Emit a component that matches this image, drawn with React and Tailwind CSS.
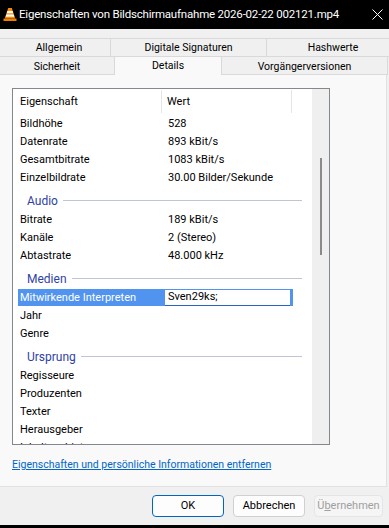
import React from "react";

const font = "font-['Roboto','Noto_Sans',sans-serif]";

const items = [
  { k: "Bildhöhe", v: "528" },
  { k: "Datenrate", v: "893 kBit/s" },
  { k: "Gesamtbitrate", v: "1083 kBit/s" },
  { k: "Einzelbildrate", v: "30.00 Bilder/Sekunde" },
  { group: "Audio" },
  { k: "Bitrate", v: "189 kBit/s" },
  { k: "Kanäle", v: "2 (Stereo)" },
  { k: "Abtastrate", v: "48.000 kHz" },
  { group: "Medien" },
  { k: "Mitwirkende Interpreten", v: "Sven29ks;", selected: true },
  { k: "Jahr", v: "" },
  { k: "Genre", v: "" },
  { group: "Ursprung" },
  { k: "Regisseure", v: "" },
  { k: "Produzenten", v: "" },
  { k: "Texter", v: "" },
  { k: "Herausgeber", v: "" },
  { k: "Inhaltsanbieter", v: "" },
];

function VlcIcon() {
  return (
    <svg width="14" height="15" viewBox="0 0 14 15">
      <path d="M5.2 1h3.6l3.4 10.5H1.8z" fill="#ff8800" />
      <path d="M4.4 4h5.2l.7 2.2H3.7z" fill="#fff" />
      <path d="M3.3 7.6h7.4l.7 2.2H2.6z" fill="#fff" />
      <path d="M0.5 11.5h13v2.5H0.5z" fill="#f07d00" />
    </svg>
  );
}

function Row({ it }) {
  if (it.group) {
    return (
      <div className="h-[24px] shrink-0 flex items-center pl-[14px] pr-[10px] pt-[5px]">
        <span className="text-[12px] text-[#2f3fa6]">{it.group}</span>
        <div className="flex-1 h-px bg-[#bfc4d6] ml-[5px]" />
      </div>
    );
  }
  if (it.selected) {
    return (
      <div className="h-[18px] shrink-0 flex items-end pl-[5px]">
        <div className="w-[275px] h-[17px] bg-[#5194f0] flex items-center pl-[2px] pt-[1px]">
          <span className="w-[145px] text-white text-[11px]">{it.k}</span>
          <div className="w-[125px] h-[16px] bg-white border-b border-[#2a63c2] flex items-center pl-[3px] text-[11px] text-black">
            {it.v}
          </div>
        </div>
      </div>
    );
  }
  return (
    <div className="h-[18px] shrink-0 flex items-center pl-[7px] pt-[3px] text-[11px] text-black">
      <span className="w-[148px] shrink-0">{it.k}</span>
      <span>{it.v}</span>
    </div>
  );
}

export default function App() {
  return (
    <div className={`w-[389px] h-[528px] bg-[#f0f0f0] flex flex-col overflow-hidden ${font}`}>
      {/* title bar */}
      <div className="h-[29px] shrink-0 bg-black flex items-center pl-[3px] pr-[6px]">
        <VlcIcon />
        <span className="ml-[2px] text-white text-[11.5px] tracking-[-0.2px] whitespace-nowrap">
          Eigenschaften von Bildschirmaufnahme 2026-02-22 002121.mp4
        </span>
        <svg className="ml-auto" width="11" height="11" viewBox="0 0 11 11">
          <path d="M0.5 0.5l10 10M10.5 0.5l-10 10" stroke="#fff" strokeWidth="1" />
        </svg>
      </div>

      {/* tabs */}
      <div className="h-[46px] shrink-0 pt-[9px] text-[10.5px] text-black">
        <div className="h-[18px] flex border-t border-[#d9d9d9]">
          <div className="w-[111px] border-r border-[#d9d9d9] flex items-center justify-center pl-[8px]">Allgemein</div>
          <div className="w-[156px] border-r border-[#d9d9d9] flex items-center justify-center">Digitale Signaturen</div>
          <div className="flex-1 flex items-center justify-center pl-[10px]">Hashwerte</div>
        </div>
        <div className="h-[19px] flex border-t border-[#d9d9d9]">
          <div className="w-[115px] border-r border-b border-[#d9d9d9] flex items-center justify-center pt-[2px]">Sicherheit</div>
          <div className="w-[106px] -mt-px h-[20px] bg-[#f9f9f9] border-t border-[#d9d9d9] flex items-center justify-center pb-[2px]">Details</div>
          <div className="flex-1 mr-px border-l border-r border-b border-[#d9d9d9] flex items-center justify-center pt-[2px]">Vorgängerversionen</div>
        </div>
      </div>

      {/* panel */}
      <div className="h-[412px] shrink-0 mr-[2px] bg-[#f9f9f9] border-r border-b border-[#e1e1e1] pt-[13px] pl-[12px]">
        <div className="w-[318px] h-[357px] border border-[#828790] bg-white flex overflow-hidden">
          <div className="flex-1 flex flex-col overflow-hidden">
            <div className="h-[25px] shrink-0 flex text-[11px] text-black">
              <div className="w-[149px] border-r border-[#e5e5e5] my-px flex items-center pl-[7px] pt-[2px]">Eigenschaft</div>
              <div className="w-[130px] border-r border-[#e5e5e5] my-px flex items-center pl-[5px] pt-[2px]">Wert</div>
            </div>
            {items.map((it, i) => (
              <Row key={i} it={it} />
            ))}
          </div>
          <div className="w-[17px] shrink-0 bg-[#efefef] flex flex-col items-center">
            <div className="mt-[69px] w-[2px] h-[97px] bg-[#8a8a8a]" />
          </div>
        </div>
        <div className="mt-[12px] text-[10.5px] text-[#0066cc] underline">
          Eigenschaften und persönliche Informationen entfernen
        </div>
      </div>

      {/* footer */}
      <div className="h-[38px] shrink-0 flex items-start justify-end pt-[8px] pr-[6px] gap-[9px] text-[11px]">
        <button className="w-[72px] h-[22px] rounded-[4px] border border-[#0067c0] bg-[#fdfdfd] text-black">OK</button>
        <button className="w-[72px] h-[22px] rounded-[4px] border border-[#d0d0d0] bg-[#fdfdfd] text-black">Abbrechen</button>
        <button className="w-[69px] h-[22px] rounded-[4px] border border-[#e5e5e5] bg-[#f5f5f5] text-[#a0a0a0]">
          Ü<span className="underline">b</span>ernehmen
        </button>
      </div>
      <div className="h-[3px] shrink-0 bg-black" />
    </div>
  );
}
